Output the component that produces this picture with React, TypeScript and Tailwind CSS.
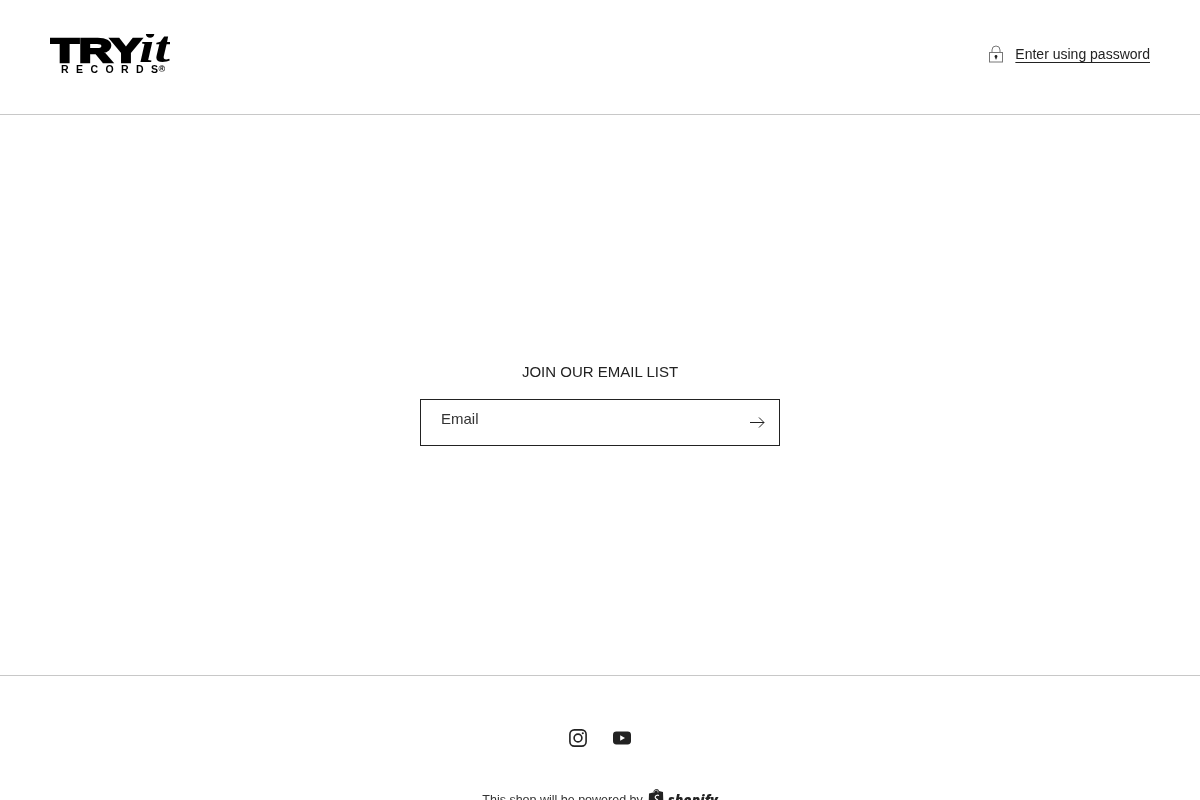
function Logo() {
  return (
    <svg width="120" height="40" viewBox="0 0 120 40" className="block">
      <text
        x="0.500"
        y="27.500"
        fontFamily="Liberation Sans"
        fontWeight="700"
        fontSize="34"
        textLength="91"
        lengthAdjust="spacingAndGlyphs"
        stroke="#000"
        strokeWidth="2.400"
        fill="#000"
      >
        TRY
      </text>
      <text
        x="89"
        y="27.500"
        fontFamily="Liberation Serif"
        fontStyle="italic"
        fontWeight="700"
        fontSize="44"
        textLength="31"
        lengthAdjust="spacingAndGlyphs"
        fill="#000"
      >
        it
      </text>
      <text
        x="11"
        y="38.500"
        fontFamily="Liberation Sans"
        fontWeight="700"
        fontSize="10.500"
        textLength="97"
        lengthAdjust="spacing"
        fill="#000"
      >
        RECORDS
      </text>
      <text x="108.500" y="37.500" fontFamily="Liberation Sans" fontWeight="700" fontSize="9" fill="#000">
        ®
      </text>
    </svg>
  )
}

function LockIcon() {
  return (
    <svg width="16" height="18" viewBox="0 0 16 18" fill="none">
      <rect x="1.500" y="7.500" width="13" height="9.500" stroke="#777" />
      <path d="M4 7.500V5a4 4 0 0 1 8 0v2.500" stroke="#777" />
      <circle cx="8" cy="11.500" r="1.400" fill="#222" />
      <rect x="7.400" y="11.500" width="1.200" height="2.800" fill="#222" />
    </svg>
  )
}

function ArrowIcon() {
  return (
    <svg width="15" height="11" viewBox="0 0 15 11" fill="none" stroke="#222" strokeWidth="1">
      <path d="M0 5.500h14" />
      <path d="M9 0.500l5 5-5 5" />
    </svg>
  )
}

function InstagramIcon() {
  return (
    <svg width="18" height="18" viewBox="0 0 18 18" fill="none" stroke="#222">
      <rect x="0.900" y="0.900" width="16.200" height="16.200" rx="4.400" strokeWidth="1.600" />
      <circle cx="9" cy="9" r="3.900" strokeWidth="1.600" />
      <circle cx="13.800" cy="4.200" r="1.050" fill="#222" stroke="none" />
    </svg>
  )
}

function YoutubeIcon() {
  return (
    <svg width="18" height="14" viewBox="0 0 18 14">
      <rect x="0" y="0.500" width="18" height="13" rx="3.400" fill="#222" />
      <path d="M7.200 4.200v5.600L12 7z" fill="#fff" />
    </svg>
  )
}

function ShopifyBag() {
  return (
    <svg width="16" height="20" viewBox="0 0 16 20" className="-mt-[2px]">
      <path d="M0.500 19 1 4.500l4-1C5.500 1.500 7 0 8.500 0c1.500 0 2.200.8 2.500 2l4 1 .5 16z" fill="#222" />
      <path d="M5.800 4V3.500c0-1.200 1.200-2.200 2.600-2.200s1.600 1 1.600 2.200" fill="none" stroke="#fff" strokeWidth="0.700" />
      <path d="M11 6.500c-2-.8-3.800.2-3.800 1.800 0 1.800 2.600 1.800 2.600 3.200 0 1-1.400 1-2.400.3" fill="none" stroke="#fff" strokeWidth="1.200" />
    </svg>
  )
}

export default function App() {
  return (
    <div className="h-[800px] overflow-hidden will-change-transform font-['Liberation_Sans',Arial,sans-serif] text-[#222]">
      <header className="flex h-[115px] items-center justify-between border-b border-[#c8c8c8] px-[50px] pb-[6px]">
        <Logo />
        <div className="flex items-center gap-[11px]">
          <LockIcon />
          <span className="mt-px text-[14px] leading-[17px] underline underline-offset-[3px]">Enter using password</span>
        </div>
      </header>

      <main className="flex h-[560px] flex-col items-center pt-[248px]">
        <h2 className="text-[15px] leading-[18px]">JOIN OUR EMAIL LIST</h2>
        <div className="mt-[18px] flex h-[47px] w-[360px] items-start justify-between border border-[#222] pl-5 pr-[14px]">
          <span className="mt-[10px] text-[15px] leading-[17px] text-[#333]">Email</span>
          <div className="mt-[17px]">
            <ArrowIcon />
          </div>
        </div>
      </main>

      <footer className="border-t border-[#c8c8c8]">
        <div className="flex h-[71px] items-center justify-center gap-[26px] pt-[53px]">
          <InstagramIcon />
          <YoutubeIcon />
        </div>
        <div className="mt-[44px] flex items-center justify-center gap-[5px] text-[12.500px] leading-[14px] text-[#333]">
          <span>This shop will be powered by</span>
          <span className="flex items-center gap-[4px]">
            <ShopifyBag />
            <span className="font-['Open_Sans',sans-serif] text-[13.800px] font-extrabold italic leading-[14px] text-[#222]">shopify</span>
          </span>
        </div>
      </footer>
    </div>
  )
}
